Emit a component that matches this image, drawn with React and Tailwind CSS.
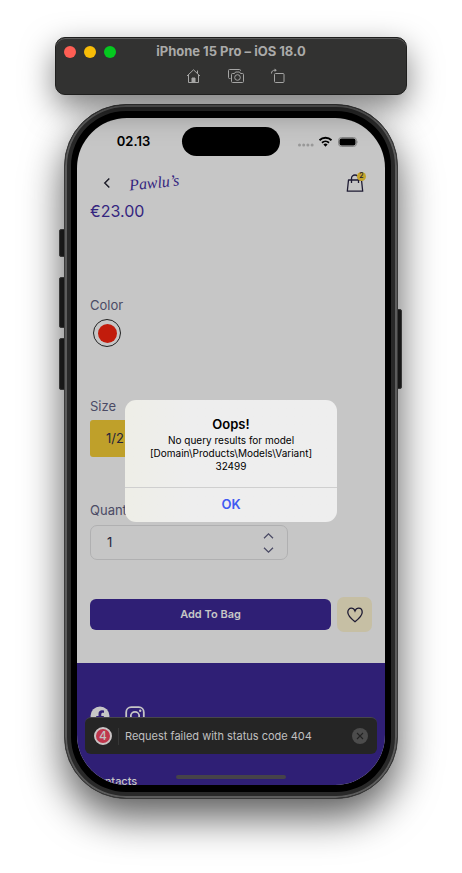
import { useState } from "react";

function TitleBar() {
  return (
    <header className="relative z-10 h-[58px] rounded-[10px] border border-[#1f1f1e] bg-[#323231] shadow-[inset_0_1px_0_#5c5c5c,0_12px_32px_rgba(0,0,0,0.5)]">
      <div className="grid h-[28px] grid-cols-[80px_1fr_80px] items-center">
        <div className="flex gap-2 pl-2">
          <button aria-label="Close" className="size-3 rounded-full bg-[#fe5e54]" />
          <button aria-label="Minimize" className="size-3 rounded-full bg-[#f8bd07]" />
          <button aria-label="Zoom" className="size-3 rounded-full bg-[#05c91f]" />
        </div>
        <h1 className="text-center text-[13px] font-bold whitespace-nowrap text-[#aaaaa9]">
          iPhone 15 Pro – iOS 18.0
        </h1>
      </div>
      <div className="flex justify-center gap-[27px] pt-[2px] pl-2 text-[#a5a5a4]">
        <button aria-label="Home">
          <svg width="15" height="16" viewBox="0 0 15 16" fill="none" stroke="currentColor" strokeWidth="1">
            <path d="M1 8 7.500 1.800 14 8M2.500 7v7.500h10V7M11.500 5.500V2.500" />
            <path d="M6 14.500V10h3v4.500z" fill="currentColor" />
          </svg>
        </button>
        <button aria-label="Screenshot">
          <svg width="16" height="16" viewBox="0 0 16 16" fill="none" stroke="currentColor" strokeWidth="1">
            <path d="M2.500 10.500H1.500a1 1 0 0 1-1-1v-7a1 1 0 0 1 1-1h10a1 1 0 0 1 1 1V3" />
            <path d="M4.500 5.500H6.500l1-1.500h4l1 1.500h2a1 1 0 0 1 1 1v7a1 1 0 0 1-1 1h-10a1 1 0 0 1-1-1v-7a1 1 0 0 1 1-1z" />
            <circle cx="9.500" cy="9.500" r="2.800" />
          </svg>
        </button>
        <button aria-label="Rotate">
          <svg width="14" height="16" viewBox="0 0 14 16" fill="none" stroke="currentColor" strokeWidth="1">
            <rect x="3.500" y="5.500" width="9.500" height="9" rx="1" />
            <path d="M.500 5.500C.500 3.200 1.800 2.200 4 2.200" />
            <path d="M3.600.500 5.800 2.200 3.600 3.900z" fill="currentColor" stroke="none" />
          </svg>
        </button>
      </div>
    </header>
  );
}

function StatusBar() {
  return (
    <div className="grid h-[29px] shrink-0 grid-cols-[1fr_98px_1fr] items-center">
      <div className="text-center text-[13px] font-semibold">
        <span className="pl-2">02.13</span>
      </div>
      <div className="h-full rounded-full bg-black" />
      <div className="flex items-center justify-center pr-[18px] pl-2">
        <svg width="60" height="14" viewBox="0 0 60 14" aria-label="Wi-Fi on, battery full">
          <g fill="#999">
            <circle cx="1.500" cy="10" r="1.500" />
            <circle cx="5.700" cy="10" r="1.500" />
            <circle cx="9.900" cy="10" r="1.500" />
            <circle cx="14.100" cy="10" r="1.500" />
          </g>
          <g fill="none" stroke="#000" strokeWidth="1.900">
            <path d="M21.500 5.200a8.600 8.600 0 0 1 12 0" />
            <path d="M24 7.700a5.200 5.200 0 0 1 7 0" />
          </g>
          <path d="M25.400 9.400a3.300 3.300 0 0 1 4.200 0L27.500 11.700z" />
          <rect x="40.500" y="2.500" width="18" height="9" rx="3" fill="none" stroke="#858585" />
          <rect x="41.500" y="3.500" width="16" height="7" rx="2" />
          <path d="M59.500 5.500v3c.8-.5.8-2.500 0-3z" fill="#858585" />
        </svg>
      </div>
    </div>
  );
}

function ShopHeader() {
  return (
    <div className="flex h-[36px] items-center pr-2 pl-[13px]">
      <button aria-label="Back" className="mr-[18px]">
        <svg width="8" height="12" viewBox="0 0 8 12" fill="none" stroke="#1d1d29" strokeWidth="1.500">
          <path d="M6.300 1.500 1.800 6l4.500 4.500" />
        </svg>
      </button>
      <a
        href="#home"
        className="-rotate-6 font-['Liberation_Serif',cursive] text-base leading-5 text-[#34257f] italic"
      >
        Pawlu’s
      </a>
      <button aria-label="Shopping bag, 2 items" className="relative ml-auto">
        <svg width="18" height="20" viewBox="0 0 18 20" fill="none" stroke="#1e1b33" strokeWidth="1.300" strokeLinejoin="round">
          <path d="M2.500 7h13l1.200 11.200H1.300z" />
          <path d="M5.500 10V5.500a3.500 3.500 0 0 1 7 0V10" />
        </svg>
        <span className="absolute -top-px -right-[2px] flex size-[9px] items-center justify-center rounded-full bg-[#c3a42c] text-[7px] font-medium text-[#1e1b33]">
          2
        </span>
      </button>
    </div>
  );
}

function ProductForm() {
  const [quantity, setQuantity] = useState(1);
  return (
    <form className="text-[13px] text-[#4b4b65]" onSubmit={(e) => e.preventDefault()}>
      <p className="text-base leading-5 text-[#34257f]">€23.00</p>

      <fieldset className="mt-[74px]">
        <legend className="leading-5">Color</legend>
        <label className="mt-1 ml-[3px] flex size-7 items-center justify-center rounded-full border border-[#222]">
          <input
            type="radio"
            name="color"
            aria-label="Red"
            defaultChecked
            className="size-[19px] appearance-none rounded-full bg-[#c21c0c]"
          />
        </label>
      </fieldset>

      <fieldset className="mt-[49px]">
        <legend className="leading-5">Size</legend>
        <button type="button" className="mt-1 h-[37px] w-[50px] rounded-[3px] bg-[#bfa02a] text-[#25243a]">
          1/2
        </button>
      </fieldset>

      <label htmlFor="quantity" className="mt-[43px] block leading-5">
        Quantity
      </label>
      <div className="mt-[5px] mr-[84px] flex h-[35px] items-center rounded-[7px] border border-[#b0b0b1] pr-[13px] pl-4">
        <input
          id="quantity"
          value={quantity}
          onChange={(e) => setQuantity(Number(e.target.value) || 1)}
          className="w-full min-w-0 bg-transparent text-[#25243a] outline-none"
        />
        <div className="flex flex-col gap-2 text-[#4b4b65]">
          <button type="button" aria-label="Increase quantity" onClick={() => setQuantity(quantity + 1)}>
            <svg width="11" height="6" viewBox="0 0 11 6" fill="none" stroke="currentColor" strokeWidth="1.300">
              <path d="M1 5.300 5.500.900 10 5.300" />
            </svg>
          </button>
          <button type="button" aria-label="Decrease quantity" onClick={() => setQuantity(Math.max(1, quantity - 1))}>
            <svg width="11" height="6" viewBox="0 0 11 6" fill="none" stroke="currentColor" strokeWidth="1.300">
              <path d="M1 .700 5.500 5.100 10 .700" />
            </svg>
          </button>
        </div>
      </div>

      <div className="mt-[37px] flex items-center gap-[6px]">
        <button type="submit" className="h-[31px] flex-1 rounded-[6px] bg-[#2f1f75] text-[11px] font-semibold text-[#c6c6c6]">
          Add To Bag
        </button>
        <button type="button" aria-label="Add to wishlist" className="flex size-[35px] items-center justify-center rounded-[7px] bg-[#c6bfa4]">
          <svg width="18" height="16" viewBox="0 0 18 16" fill="none" stroke="#1e1b33" strokeWidth="1.300">
            <path d="M9 14.700C4.500 11.300 1.800 8.700 1.800 5.300 1.800 2.800 3.300 1.200 5.300 1.200 7 1.200 8.300 2.300 9 4c.7-1.700 2-2.800 3.700-2.800 2 0 3.500 1.600 3.500 4.100 0 3.400-2.700 6-7.200 9.400z" />
          </svg>
        </button>
      </div>
    </form>
  );
}

function Footer() {
  return (
    <footer className="flex-1 bg-[#2f1f75] px-[13px] pt-[43px] text-[#c6c6c6]">
      <div className="flex gap-[15px]">
        <a href="#facebook" aria-label="Facebook">
          <svg width="20" height="20" viewBox="0 0 20 20">
            <circle cx="10" cy="10" r="9.500" fill="currentColor" />
            <path d="M8.500 20v-7H6.200v-2.900h2.300V8c0-2.400 1.400-3.700 3.500-3.700l2 .2v2.300h-1.200c-1.100 0-1.500.7-1.500 1.400v1.900h2.600l-.4 2.900h-2.200v7z" fill="#2f1f75" />
          </svg>
        </a>
        <a href="#instagram" aria-label="Instagram">
          <svg width="20" height="20" viewBox="0 0 20 20" fill="none" stroke="currentColor" strokeWidth="1.800">
            <rect x="1.200" y="1.200" width="17.600" height="17.600" rx="5" />
            <circle cx="10" cy="10" r="4.200" />
            <circle cx="15.200" cy="4.800" r="1.200" fill="currentColor" stroke="none" />
          </svg>
        </a>
      </div>
      <h2 className="mt-[46px] text-[11px] leading-[18px] font-medium">Contacts</h2>
    </footer>
  );
}

function ErrorAlert() {
  return (
    <div className="absolute inset-0 flex items-center justify-center pt-[19px]">
      <div
        role="alertdialog"
        aria-labelledby="alert-title"
        aria-describedby="alert-message"
        className="w-[212px] rounded-[11px] bg-[#eeeeee] bg-linear-to-r from-[#eeeee7] to-[#eeeeee] to-30% text-center text-black"
      >
        <div className="px-4 pt-4 pb-[14px]">
          <h2 id="alert-title" className="text-[13px] leading-4 font-semibold">
            Oops!
          </h2>
          <p id="alert-message" className="mt-[2px] text-[10px] leading-[13px]">
            No query results for model
            <br />
            [Domain\Products\Models\Variant]
            <br />
            32499
          </p>
        </div>
        <button className="h-[35px] w-full border-t border-[#cfcfcf] text-[13px] font-semibold text-[#3f5bf2]">OK</button>
      </div>
    </div>
  );
}

function Toast() {
  return (
    <div
      role="status"
      className="absolute inset-x-2 bottom-[31px] flex h-[37px] items-center rounded-[6px] border-t border-[#47464a] bg-[#252525] px-[9px] text-[11px] text-[#c0c0c0]"
    >
      <span className="flex size-[18px] items-center justify-center rounded-full border-2 border-[#c9c3c4] bg-[#bf364c] text-xs font-medium">
        4
      </span>
      <span className="mx-[6px] h-[17px] w-px bg-[#363636]" />
      <span className="flex-1 whitespace-nowrap">Request failed with status code 404</span>
      <button aria-label="Dismiss" className="flex size-4 items-center justify-center rounded-full bg-[#4c4c4c]">
        <svg width="8" height="8" viewBox="0 0 8 8" stroke="#222" strokeWidth="1.100">
          <path d="M1 1l6 6M7 1 1 7" />
        </svg>
      </button>
    </div>
  );
}

function Phone() {
  return (
    <div className="relative mx-[9px] mt-[9px]">
      <div className="absolute top-[125px] -left-[5px] h-[28px] w-[7px] rounded-[2px] border border-[#4d4d4d] bg-[#222]" />
      <div className="absolute top-[173px] -left-[5px] h-[51px] w-[7px] rounded-[2px] border border-[#4d4d4d] bg-[#222]" />
      <div className="absolute top-[234px] -left-[5px] h-[52px] w-[7px] rounded-[2px] border border-[#4d4d4d] bg-[#222]" />
      <div className="absolute top-[205px] -right-[4px] h-[80px] w-[6px] rounded-[2px] border border-[#4d4d4d] bg-[#222]" />
      <div className="relative rounded-[62px] border border-[#3a3a3a] bg-black px-3 py-[13px] shadow-[inset_0_0_0_2px_#5c5c5c,inset_0_0_0_6px_#292929,0_18px_40px_rgba(0,0,0,0.65)]">
        <main className="relative flex h-[667px] flex-col overflow-hidden rounded-[50px] bg-[#c6c6c6] pt-[9px]">
          <StatusBar />
          <div className="shrink-0 px-[13px] pt-[9px] pb-[31px]">
            <ShopHeader />
            <ProductForm />
          </div>
          <Footer />
          <ErrorAlert />
          <Toast />
          <div className="absolute bottom-[6px] left-1/2 h-1 w-[110px] -translate-x-1/2 rounded-full bg-[#464349]" />
        </main>
      </div>
    </div>
  );
}

export default function App() {
  return (
    <div className="min-h-screen overflow-hidden bg-white px-4 pt-[37px] pb-[75px] font-['Inter','Liberation_Sans',sans-serif]">
      <div className="mx-auto max-w-[352px]">
        <TitleBar />
        <Phone />
      </div>
    </div>
  );
}
